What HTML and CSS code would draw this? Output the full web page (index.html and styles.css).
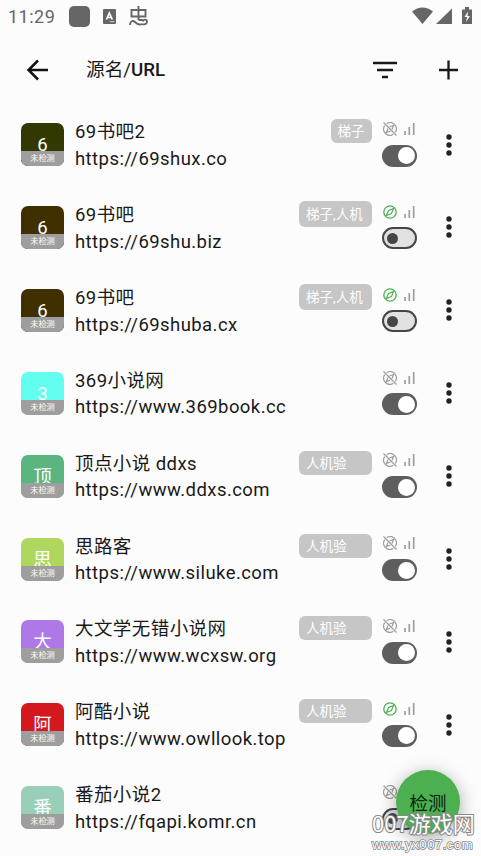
FILE: index.html
```
<!DOCTYPE html>
<html lang="zh-CN">
<head>
<meta charset="utf-8">
<title>源名/URL</title>
<link rel="stylesheet" href="styles.css">
</head>
<body>
<svg class="defs" width="0" height="0">
  <symbol id="compass" viewBox="0 0 14 14"><circle cx="7" cy="7" r="6.200" fill="none" stroke="currentColor" stroke-width="1.300"/><path d="M10.600 3.400 8.500 8.500 3.400 10.600 5.500 5.500Z" fill="none" stroke="currentColor" stroke-width="1.100"/></symbol>
  <symbol id="compass-off" viewBox="0 0 14 14"><path d="M3.700 1.700A6.200 6.200 0 0 1 12.300 10.300M10.300 12.300A6.200 6.200 0 0 1 1.700 3.700M.5.500l13 13M6.500 5 10.500 3.500 9 7.500M7.500 9 3.500 10.500 5 6.500" fill="none" stroke="currentColor" stroke-width="1.200"/></symbol>
  <symbol id="bars" viewBox="0 0 11 12"><path d="M1 8v4M5.300 4v8M9.700 0v12" stroke="currentColor" stroke-width="1.700"/></symbol>
</svg>
<div class="screen">
  <header class="status">
    <span class="clock">11:29</span>
    <span class="square"></span>
    <svg class="app" viewBox="0 0 13 15"><rect width="13" height="15" rx="1" fill="#666"/><path d="M3.500 10.500 6.300 4 9.300 10.500M4.500 8.500h4" fill="none" stroke="#fff" stroke-width="1.700"/><path d="M6.500 12.700h5" stroke="#ccc"/></svg>
    <svg class="bug" viewBox="0 0 20 20"><path d="M9.500 0v14M2.500 4h14v6.500h-14zM1 19c0-4 3-5 5-3s5 3 7 2M9.500 14h4M13 18c2 1 5 0 5-2.500S14 13 14 15.500" fill="none" stroke="#666" stroke-width="1.900"/></svg>
    <svg class="signals" viewBox="0 0 62 18"><path d="M0 4.500Q10.500-3.500 21 4.500L10.500 17ZM24 17 40 1.500V17Z" fill="#666"/><path d="M50 2.500h3V0h4v2.500h3V17H50Z" fill="#666"/><path d="M56 4.500 52.500 10H55l-.8 5L57.800 9H55.500Z" fill="#fff"/></svg>
  </header>
  <nav class="bar">
    <svg class="back" viewBox="0 0 22 22"><path d="M11 1.500 1.500 11l9.500 9.500M2 11h19" fill="none" stroke="#111" stroke-width="2.500"/></svg>
    <h1>源名/<b>URL</b></h1>
    <svg class="filter" viewBox="0 0 24 18"><path d="M0 2h24M4 9h16M9 16h6" stroke="#191919" stroke-width="2.500"/></svg>
    <svg class="add" viewBox="0 0 20 20"><path d="M0 10h19M9.500 .5v19" stroke="#191919" stroke-width="2.300"/></svg>
  </nav>
  <main id="list"></main>
  <button class="fab">检测</button>
  <div class="mark"><div class="mark-name">007游戏网</div><div class="mark-url">www.yx007.com</div></div>
</div>
<script src="list.js"></script>
</body>
</html>
```
FILE: styles.css
```
* { box-sizing: border-box; }
body { margin: 0; background: #fcfcfc; font-family: Roboto, "Noto Sans CJK SC", sans-serif; color: #191919; }
.defs { position: absolute; }
.screen { position: relative; width: 481px; height: 856px; overflow: hidden; }
svg { display: block; flex: none; }
.status { display: flex; align-items: center; height: 32px; padding: 0 8px; color: #666; }
.clock { width: 61px; font-size: 18px; letter-spacing: .5px; }
.square { width: 21px; height: 21px; border-radius: 5px; background: #666; }
.app { width: 13px; height: 15px; margin-left: 13px; }
.bug { width: 20px; height: 20px; margin-left: 13px; }
.signals { width: 62px; height: 18px; margin-left: auto; margin-right: -1px; }
.bar { display: flex; align-items: center; height: 74px; padding: 1px 22px 0 27px; }
.back { width: 22px; height: 22px; }
.bar h1 { flex: 1; margin: 0 0 0 37px; font-size: 18.700px; font-weight: 400; line-height: 26px; }
.bar b { font-weight: 500; }
.filter { width: 24px; height: 18px; }
.add { width: 20px; height: 20px; margin-left: 42px; }
.row { display: flex; height: 82.920px; padding: 17px 0 0 21px; }
.cover { width: 43px; height: 43px; border-radius: 7px; overflow: hidden; color: #fff; text-align: center; display: flex; flex-direction: column; }
.letter { height: 28px; padding-top: 11px; font-size: 18.500px; line-height: 22px; overflow: hidden; flex: none; }
.state { height: 15px; background: #9e9e9e; font-size: 8.200px; line-height: 15px; }
.info { width: 224px; margin: -4px 0 0 11px; font-size: 18.500px; line-height: 26.700px; white-space: nowrap; letter-spacing: .43px; }
.tagbox { width: 72.500px; margin-top: -4px; display: flex; justify-content: flex-end; align-items: flex-start; }
.tag { height: 24px; padding: 0 7px; border-radius: 6px; background: #c6c6c6; color: #fff; font-size: 13.500px; line-height: 24px; white-space: nowrap; }
.wide { width: 72.500px; }
.tall { height: 26px; line-height: 26px; margin-top: -.5px; }
.controls { width: 36px; margin-left: 10px; color: #9e9e9e; }
.marks { display: flex; align-items: center; height: 14px; padding-left: 1px; margin-top: -1.200px; }
.compass { width: 14px; height: 14px; }
.green { color: #4caf50; }
.bars { width: 11px; height: 12px; margin-left: 7px; }
.toggle { width: 35px; height: 22px; margin-top: 8.700px; border-radius: 11px; border: 2px solid #44474a; background: #e1e1e1; display: flex; align-items: center; padding-left: 3px; }
.toggle::after { content: ""; width: 11px; height: 11px; border-radius: 50%; background: #44474a; }
.toggle.on { background: #5e5e5e; border: 0; padding-left: 16px; }
.on::after { width: 17px; height: 17px; background: #fff; }
.dots { width: 6px; height: 22px; margin: 10.500px 0 0 28px; }
.fab { position: absolute; left: 396px; top: 770px; width: 64px; height: 64px; padding: 0; border: 0; border-radius: 50%; background: #4caf50; color: #0b250c; font: 18.500px Roboto, "Noto Sans CJK SC", sans-serif; box-shadow: 0 4px 18px rgba(0,0,0,.35); }
.mark { position: absolute; left: 372px; top: 807px; width: 106px; color: #fff; white-space: nowrap; -webkit-text-stroke: 2px #888; paint-order: stroke fill; font-family: "Noto Sans CJK SC", sans-serif; }
.mark-name { font-size: 22px; line-height: 30px; font-weight: 400; }
.mark-url { font-size: 13px; line-height: 16px; font-family: "Liberation Sans", sans-serif; letter-spacing: .55px; -webkit-text-stroke: 1.600px #888; }
```
FILE: list.js
```
const sources = [
  ["69书吧2", "https://69shux.co", "#333800", "梯子", false, true],
  ["69书吧", "https://69shu.biz", "#403000", "梯子,人机", true, false],
  ["69书吧", "https://69shuba.cx", "#403000", "梯子,人机", true, false],
  ["369小说网", "https://www.369book.cc", "#62fff0", "", false, true],
  ["顶点小说 ddxs", "https://www.ddxs.com", "#5ab67e", "人机验", false, true],
  ["思路客", "https://www.siluke.com", "#afd65d", "人机验", false, true],
  ["大文学无错小说网", "https://www.wcxsw.org", "#af78e7", "人机验", false, true],
  ["阿酷小说", "https://www.owllook.top", "#d4191e", "人机验", true, true],
  ["番茄小说2", "https://fqapi.komr.cn", "#99cfb9", "", false, false]
];
const tagClass = tag => tag === "梯子" ? "tag" : tag.includes(",") ? "tag wide tall" : "tag wide";
document.getElementById("list").innerHTML = sources.map(([title, url, color, tag, found, on]) => `
  <section class="row">
    <div class="cover" style="background:${color}"><div class="letter">${title[0]}</div><div class="state">未检测</div></div>
    <div class="info"><div>${title}</div><div>${url}</div></div>
    <div class="tagbox">${tag ? `<span class="${tagClass(tag)}">${tag}</span>` : ""}</div>
    <div class="controls">
      <div class="marks"><svg class="compass ${found ? "green" : ""}"><use href="#compass${found ? "" : "-off"}"/></svg><svg class="bars"><use href="#bars"/></svg></div>
      <div class="toggle ${on ? "on" : ""}"></div>
    </div>
    <svg class="dots" viewBox="0 0 6 22"><g fill="#222"><circle cx="3" cy="3" r="2.700"/><circle cx="3" cy="11" r="2.700"/><circle cx="3" cy="19" r="2.700"/></g></svg>
  </section>`).join("");
```
